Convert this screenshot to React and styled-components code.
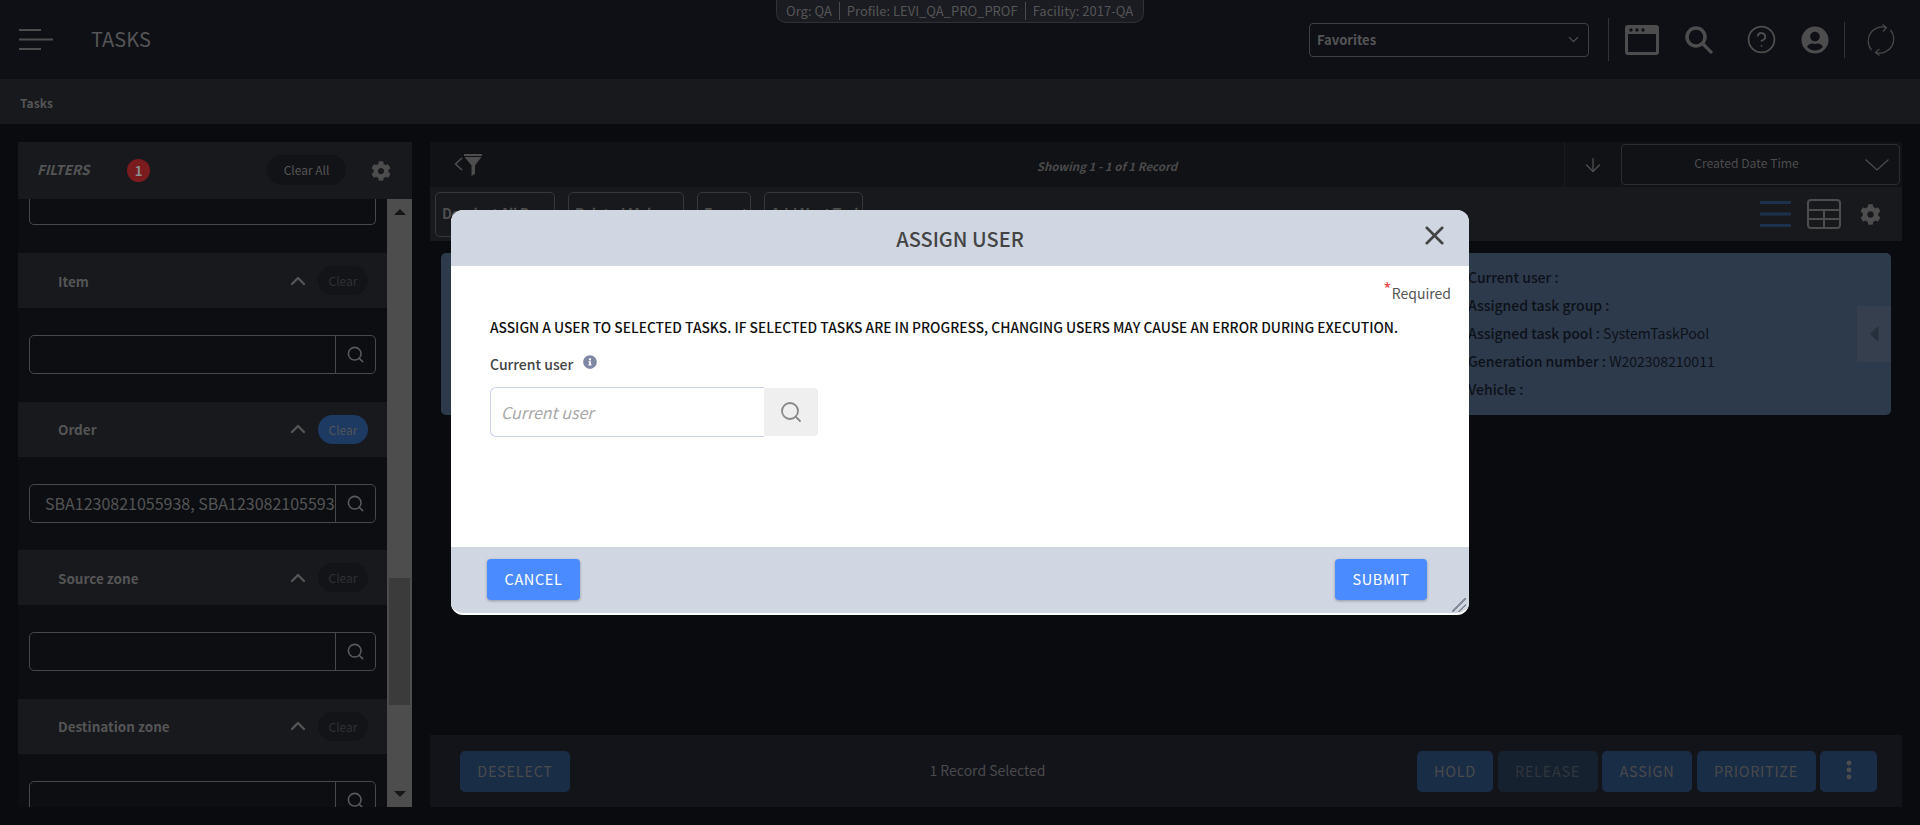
import React from 'react';
import styled, { createGlobalStyle } from 'styled-components';
import { ChevronDown, ChevronUp, CircleHelp, Search, ArrowDown, X } from 'lucide-react';
import { FaCog, FaUserCircle, FaInfoCircle, FaCaretLeft } from 'react-icons/fa';

const GlobalStyle = createGlobalStyle`
    html, body {
        margin: 0;
        height: 100%;
        overflow: hidden;
        background: #0a0b0e;
    }

    * {
        box-sizing: border-box;
    }

    body {
        font-family: "Noto Sans CJK SC", "Noto Sans", sans-serif;
        color: #555;
    }
`;

function HamburgerIcon() {
    return (
        <svg width="34" height="21" viewBox="0 0 34 21" fill="none" stroke="#4d4d4d" strokeWidth="2">
            <path d="M0 1h22M0 10.500h34M0 20h22" />
        </svg>
    );
}

function BrowserIcon() {
    return (
        <svg width="34" height="30" viewBox="0 0 34 30">
            <path
                fillRule="evenodd"
                fill="#4d4d4d"
                d="M3 0h28a3 3 0 0 1 3 3v24a3 3 0 0 1-3 3H3a3 3 0 0 1-3-3V3a3 3 0 0 1 3-3zM3 9v18h28V9z"
            />
            <circle cx="6" cy="5" r="1.700" fill="#0f1015" />
            <circle cx="12" cy="5" r="1.700" fill="#0f1015" />
            <circle cx="18" cy="5" r="1.700" fill="#0f1015" />
        </svg>
    );
}

function BigSearchIcon() {
    return (
        <svg width="28" height="28" viewBox="0 0 28 28" fill="none" stroke="#4d4d4d">
            <circle cx="11" cy="11" r="9" strokeWidth="3.500" />
            <path d="M17.500 17.500L27 27" strokeWidth="3.200" />
        </svg>
    );
}

function RefreshIcon() {
    return (
        <svg width="30" height="32" viewBox="0 0 30 32" fill="none" stroke="#4a4a4a" strokeWidth="1.200">
            <path d="M20 3.500A14 14 0 0 0 5.500 26" />
            <path d="M16.500 0.500L20.500 3.500L17 7.500" />
            <path d="M10 28.500A14 14 0 0 0 24.500 6" />
            <path d="M13.500 25L9.500 28.500L13.500 31.500" />
        </svg>
    );
}

function FilterToggleIcon() {
    return (
        <svg width="28" height="22" viewBox="0 0 28 22">
            <path d="M8 4L1.500 10L8 16" fill="none" stroke="#4d4d4d" strokeWidth="1.600" />
            <path d="M10 0h18v2H10zM10.500 3h17l-6.500 8.500V20l-3.500 2V11.500z" fill="#4d4d4d" />
        </svg>
    );
}

function TableIcon() {
    return (
        <svg width="34" height="30" viewBox="0 0 34 30" fill="none" stroke="#4d4d4d" strokeWidth="2">
            <rect x="1" y="1" width="32" height="28" rx="3" />
            <path d="M1 11h32M1 20h32M17 11v18" />
        </svg>
    );
}

function ListIcon() {
    return (
        <svg width="31" height="26" viewBox="0 0 31 26" fill="#1b324f">
            <rect width="31" height="3" />
            <rect y="11.500" width="31" height="3" />
            <rect y="23" width="31" height="3" />
        </svg>
    );
}

function MoreIcon() {
    return (
        <svg width="6" height="20" viewBox="0 0 6 20" fill="#4d4d4d">
            <circle cx="3" cy="3" r="2.400" />
            <circle cx="3" cy="10" r="2.400" />
            <circle cx="3" cy="17" r="2.400" />
        </svg>
    );
}

function WideChevronIcon() {
    return (
        <svg width="24" height="12" viewBox="0 0 24 12" fill="none" stroke="#4d4d4d" strokeWidth="1.200">
            <path d="M0.500 0.500L12 11L23.500 0.500" />
        </svg>
    );
}

function FilterSection({ title, value, active }) {
    return (
        <section>
            <SectionHeader>
                <SectionTitle>{title}</SectionTitle>
                <ChevronUp size={24} strokeWidth={2.4} color="#555" />
                <ClearPill $active={active}>Clear</ClearPill>
            </SectionHeader>
            <SectionBody>
                <SearchField>
                    <FieldValue>{value}</FieldValue>
                    <FieldButton>
                        <Search size={19} color="#5a5a5a" strokeWidth={2} />
                    </FieldButton>
                </SearchField>
            </SectionBody>
        </section>
    );
}

export default function App() {
    return (
        <>
            <GlobalStyle />
            <Page>
                <TopBar>
                    <HamburgerIcon />
                    <PageTitle>TASKS</PageTitle>
                    <ContextPill>
                        <ContextItem>Org: QA</ContextItem>
                        <ContextItem>Profile: LEVI_QA_PRO_PROF</ContextItem>
                        <ContextItem>Facility: 2017-QA</ContextItem>
                    </ContextPill>
                    <FavoritesSelect>
                        <span>Favorites</span>
                        <ChevronDown size={17} color="#555" strokeWidth={1.5} />
                    </FavoritesSelect>
                    <TallDivider />
                    <TopIcons>
                        <BrowserIcon />
                        <BigSearchIcon />
                        <CircleHelp size={31} color="#4d4d4d" strokeWidth={1.400} />
                        <FaUserCircle size={28} color="#4d4d4d" />
                    </TopIcons>
                    <ShortDivider />
                    <RefreshIcon />
                </TopBar>

                <Breadcrumb>Tasks</Breadcrumb>

                <Content>
                    <Sidebar>
                        <FiltersHeader>
                            <FiltersTitle>FILTERS</FiltersTitle>
                            <CountBadge>1</CountBadge>
                            <ClearAll>Clear All</ClearAll>
                            <FaCog size={20} color="#4d4d4d" />
                        </FiltersHeader>
                        <SidebarBody>
                            <FilterList>
                                <CutField />
                                <FilterSection title="Item" />
                                <FilterSection title="Order" value="SBA1230821055938, SBA1230821055938" active />
                                <FilterSection title="Source zone" />
                                <FilterSection title="Destination zone" />
                            </FilterList>
                            <Scrollbar>
                                <ScrollArrow />
                                <ScrollThumb />
                                <ScrollArrow $down />
                            </Scrollbar>
                        </SidebarBody>
                    </Sidebar>

                    <Main>
                        <RecordsBar>
                            <FilterToggle>
                                <FilterToggleIcon />
                            </FilterToggle>
                            <RecordCount>Showing 1 - 1 of 1 Record</RecordCount>
                            <SortDirection>
                                <ArrowDown size={22} color="#4d4d4d" strokeWidth={1.500} />
                            </SortDirection>
                            <SortSelect>
                                <span>Created Date Time</span>
                                <SortChevron>
                                    <WideChevronIcon />
                                </SortChevron>
                            </SortSelect>
                        </RecordsBar>

                        <ActionsBar>
                            <OutlineButton $width={120}>Deselect All Pages</OutlineButton>
                            <OutlineButton $width={116}>Related Make</OutlineButton>
                            <OutlineButton $width={54}>Export</OutlineButton>
                            <OutlineButton $width={99}>Add Next Task</OutlineButton>
                            <ViewIcons>
                                <ListIcon />
                                <TableIcon />
                                <FaCog size={21} color="#4d4d4d" />
                            </ViewIcons>
                        </ActionsBar>

                        <CardArea>
                            <TaskCard>
                                <CardFields>
                                    <CardField><b>Current user :</b></CardField>
                                    <CardField><b>Assigned task group :</b></CardField>
                                    <CardField><b>Assigned task pool :</b> SystemTaskPool</CardField>
                                    <CardField><b>Generation number :</b> W202308210011</CardField>
                                    <CardField><b>Vehicle :</b></CardField>
                                </CardFields>
                                <CardTab>
                                    <FaCaretLeft size={24} color="#26303d" />
                                </CardTab>
                            </TaskCard>
                        </CardArea>

                        <BottomBar>
                            <DarkButton $width={110}>DESELECT</DarkButton>
                            <SelectedCount>1 Record Selected</SelectedCount>
                            <BottomActions>
                                <DarkButton $width={76}>HOLD</DarkButton>
                                <DarkButton $width={100} $disabled>RELEASE</DarkButton>
                                <DarkButton $width={90}>ASSIGN</DarkButton>
                                <DarkButton $width={119}>PRIORITIZE</DarkButton>
                                <DarkButton $width={57}><MoreIcon /></DarkButton>
                            </BottomActions>
                        </BottomBar>
                    </Main>
                </Content>

                <Modal>
                    <ModalHeader>
                        <ModalTitle>ASSIGN USER</ModalTitle>
                        <CloseButton>
                            <X size={31} color="#444" strokeWidth={2} />
                        </CloseButton>
                    </ModalHeader>
                    <ModalBody>
                        <RequiredNote><RequiredStar>*</RequiredStar>Required</RequiredNote>
                        <Instruction>
                            ASSIGN A USER TO SELECTED TASKS. IF SELECTED TASKS ARE IN PROGRESS, CHANGING USERS MAY CAUSE AN ERROR DURING EXECUTION.
                        </Instruction>
                        <UserLabel>
                            Current user
                            <FaInfoCircle size={14} color="#7f88a3" />
                        </UserLabel>
                        <UserField>
                            <UserInput placeholder="Current user" />
                            <UserSearch>
                                <Search size={24} color="#888" strokeWidth={1.800} />
                            </UserSearch>
                        </UserField>
                    </ModalBody>
                    <ModalFooter>
                        <PrimaryButton $width={93}>CANCEL</PrimaryButton>
                        <PrimaryButton $width={92}>SUBMIT</PrimaryButton>
                    </ModalFooter>
                    <ResizeHandle />
                </Modal>
            </Page>
        </>
    );
}

const Page = styled.div`
    position: relative;
    display: flex;
    flex-direction: column;
    width: 1920px;
    height: 825px;
    overflow: hidden;
`;

const TopBar = styled.header`
    position: relative;
    display: flex;
    align-items: center;
    height: 79px;
    padding: 0 24px 0 19px;
    background: #0f1015;
`;

const PageTitle = styled.h1`
    flex: 1;
    margin: -2px 0 0 38px;
    font-size: 20px;
    font-weight: 400;
    color: #555;
`;

const ContextPill = styled.div`
    position: absolute;
    top: 0;
    left: 776px;
    display: flex;
    align-items: center;
    width: 368px;
    height: 23px;
    padding: 0 2px 1px;
    background: #1b1c21;
    border: 1px solid #303136;
    border-top: 0;
    border-radius: 0 0 10px 10px;
    font-size: 13px;
    color: #555;
    white-space: nowrap;
`;

const ContextItem = styled.span`
    padding: 0 7px;
    line-height: 18px;

    & + & {
        border-left: 1px solid #4a4a4a;
    }
`;

const FavoritesSelect = styled.div`
    display: flex;
    align-items: center;
    justify-content: space-between;
    width: 280px;
    height: 34px;
    padding: 0 6px 0 7px;
    border: 1px solid #3f3f42;
    border-radius: 4px;
    font-size: 13px;
    font-weight: 700;
    color: #555;

    & > span {
        margin-top: -1px;
    }
`;

const TallDivider = styled.div`
    width: 1px;
    height: 43px;
    margin: 0 16px 0 19px;
    background: #33343a;
`;

const TopIcons = styled.div`
    display: flex;
    align-items: center;
    gap: 26px;

    & > svg:nth-child(3) {
        margin-left: 7px;
    }

    & > svg:nth-child(4) {
        margin-left: -2px;
    }
`;

const ShortDivider = styled.div`
    width: 1px;
    height: 36px;
    margin: 0 21px 0 15px;
    background: #33343a;
`;

const Breadcrumb = styled.div`
    display: flex;
    align-items: center;
    height: 45px;
    padding: 1px 0 0 20px;
    background: #18191d;
    font-size: 12px;
    font-weight: 700;
    color: #555;
`;

const Content = styled.main`
    display: flex;
    gap: 18px;
    height: 701px;
    padding: 18px 18px 0;
`;

const Sidebar = styled.aside`
    display: flex;
    flex-direction: column;
    width: 394px;
    height: 665px;
    background: #0c0e12;
`;

const FiltersHeader = styled.div`
    display: flex;
    align-items: center;
    height: 57px;
    padding: 0 21px 0 20px;
    background: #18191d;
`;

const FiltersTitle = styled.span`
    width: 89px;
    margin: -3px 0 0 -1px;
    font-size: 13.500px;
    font-weight: 700;
    font-style: italic;
    color: #555;
`;

const CountBadge = styled.span`
    display: flex;
    align-items: center;
    justify-content: center;
    width: 23px;
    height: 23px;
    margin: -1px 0 0 1px;
    border-radius: 50%;
    background: #7a1c1e;
    font-size: 13px;
    font-weight: 700;
    color: #8c8c8c;
`;

const ClearAll = styled.span`
    display: flex;
    align-items: center;
    justify-content: center;
    width: 79px;
    height: 30px;
    margin: -1px 25px 0 auto;
    padding-bottom: 2px;
    border-radius: 15px;
    background: #121317;
    font-size: 12px;
    color: #555;
`;

const SidebarBody = styled.div`
    flex: 1;
    display: flex;
    min-height: 0;
`;

const FilterList = styled.div`
    flex: 1;
    min-width: 0;
    overflow: hidden;
`;

const CutField = styled.div`
    height: 26px;
    margin: 0 11px 28px;
    border: 1px solid #47484b;
    border-top: 0;
    border-radius: 0 0 5px 5px;
`;

const SectionHeader = styled.div`
    display: flex;
    align-items: center;
    height: 55px;
    padding: 0 19px 0 40px;
    background: #18191d;
`;

const SectionTitle = styled.span`
    flex: 1;
    font-size: 13.500px;
    font-weight: 700;
    color: #555;
`;

const ClearPill = styled.span`
    display: flex;
    align-items: center;
    justify-content: center;
    width: 50px;
    height: 29px;
    margin-left: 8px;
    border-radius: 15px;
    background: ${(props) => (props.$active ? '#1c3a62' : '#131418')};
    font-size: 12px;
    color: ${(props) => (props.$active ? '#555' : '#303134')};
`;

const SectionBody = styled.div`
    padding: 27px 11px 27.600px;
`;

const SearchField = styled.div`
    display: flex;
    height: 39px;
    border: 1px solid #47484b;
    border-radius: 5px;
`;

const FieldValue = styled.div`
    flex: 1;
    min-width: 0;
    padding-left: 15px;
    overflow: hidden;
    font-size: 16px;
    line-height: 36px;
    color: #555;
    white-space: nowrap;
`;

const FieldButton = styled.div`
    display: flex;
    align-items: center;
    justify-content: center;
    width: 40px;
    border-left: 1px solid #47484b;
`;

const Scrollbar = styled.div`
    display: flex;
    flex-direction: column;
    align-items: center;
    width: 25px;
    background: #4d4d4d;
`;

const ScrollArrow = styled.div`
    width: 0;
    height: 0;
    margin: ${(props) => (props.$down ? 'auto 0 10px' : '10px 0 0')};
    border-left: 6px solid transparent;
    border-right: 6px solid transparent;
    border-top: ${(props) => (props.$down ? '6px solid #161616' : '0')};
    border-bottom: ${(props) => (props.$down ? '0' : '6px solid #161616')};
`;

const ScrollThumb = styled.div`
    width: 21px;
    height: 127px;
    margin-top: 363px;
    background: #3b3b3b;
`;

const Main = styled.div`
    flex: 1;
    display: flex;
    flex-direction: column;
    min-width: 0;
    height: 665px;
`;

const RecordsBar = styled.div`
    display: flex;
    height: 45px;
    background: #111216;
`;

const FilterToggle = styled.div`
    display: flex;
    align-items: center;
    width: 54px;
    padding-left: 24px;
`;

const RecordCount = styled.div`
    flex: 1;
    padding-left: 166px;
    font-size: 11.500px;
    font-weight: 700;
    font-style: italic;
    line-height: 48px;
    text-align: center;
    color: #4a4a4a;
`;

const SortDirection = styled.div`
    display: flex;
    align-items: center;
    justify-content: center;
    width: 57px;
    border-left: 1px solid #1a1b1f;
`;

const SortSelect = styled.div`
    position: relative;
    display: flex;
    align-items: center;
    justify-content: center;
    width: 279px;
    height: 41px;
    margin: 2px 2px 0 0;
    border: 1px solid #2c2d30;
    border-radius: 4px;
    font-size: 12.200px;
    color: #4d4d4d;

    & > span {
        margin: -3px 0 0 -28px;
    }
`;

const SortChevron = styled.div`
    position: absolute;
    top: 14px;
    right: 10px;
    display: flex;
`;

const ActionsBar = styled.div`
    display: flex;
    align-items: center;
    gap: 13px;
    height: 54px;
    padding: 0 21px 0 5px;
    background: #18191d;
`;

const OutlineButton = styled.div`
    width: ${(props) => props.$width}px;
    height: 45px;
    padding: 0 6px;
    border: 1px solid #36373b;
    border-radius: 5px;
    overflow: hidden;
    font-size: 14px;
    font-weight: 700;
    letter-spacing: -0.4px;
    line-height: 40px;
    color: #4d4d4d;
    white-space: nowrap;
`;

const ViewIcons = styled.div`
    display: flex;
    align-items: center;
    gap: 16px;
    margin-left: auto;

    & > svg:last-child {
        margin-left: 3px;
    }
`;

const CardArea = styled.div`
    flex: 1;
    padding: 12px 11px;
`;

const TaskCard = styled.div`
    position: relative;
    height: 162px;
    padding: 10px 0 0 1027px;
    background: #2d3a4c;
    border-radius: 5px;
`;

const CardFields = styled.div`
    display: flex;
    flex-direction: column;
`;

const CardField = styled.div`
    height: 28px;
    font-size: 14px;
    line-height: 28px;
    color: #0c1118;

    & > b {
        font-weight: 500;
    }
`;

const CardTab = styled.div`
    position: absolute;
    top: 53px;
    right: 0;
    display: flex;
    align-items: center;
    justify-content: center;
    width: 34px;
    height: 56px;
    background: #353f4d;
`;

const BottomBar = styled.div`
    display: flex;
    align-items: center;
    height: 72px;
    padding: 0 25px 0 30px;
    background: #13141a;
`;

const DarkButton = styled.div`
    display: flex;
    align-items: center;
    justify-content: center;
    width: ${(props) => props.$width}px;
    height: 41px;
    padding-bottom: 2px;
    border-radius: 5px;
    background: ${(props) => (props.$disabled ? '#162130' : '#1a2d47')};
    font-size: 14.500px;
    letter-spacing: 0.7px;
    color: ${(props) => (props.$disabled ? '#2f353c' : '#4a4a4a')};
`;

const SelectedCount = styled.div`
    flex: 1;
    padding: 0 12px 2px 0;
    font-size: 14px;
    text-align: center;
    color: #4a4a4a;
`;

const BottomActions = styled.div`
    display: flex;
    gap: 4.5px;
`;

const Modal = styled.div`
    position: absolute;
    top: 210px;
    left: 451px;
    display: flex;
    flex-direction: column;
    width: 1018px;
    height: 405px;
    border-bottom: 2px solid #fff;
    border-radius: 12px;
    overflow: hidden;
    background: #fff;
`;

const ModalHeader = styled.div`
    position: relative;
    display: flex;
    align-items: center;
    justify-content: center;
    flex: none;
    height: 56px;
    background: #d0d6e2;
`;

const ModalTitle = styled.h2`
    margin: 0;
    font-size: 20px;
    font-weight: 500;
    color: #444;
`;

const CloseButton = styled.div`
    position: absolute;
    top: 10px;
    right: 19px;
    display: flex;
`;

const ModalBody = styled.div`
    flex: 1;
    display: flex;
    flex-direction: column;
    padding: 15px 18px 0 39px;
`;

const RequiredNote = styled.div`
    align-self: flex-end;
    font-size: 14px;
    line-height: 24px;
    color: #555;
`;

const RequiredStar = styled.span`
    position: relative;
    top: -3px;
    font-size: 18px;
    line-height: 1;
    color: #f04a4a;
`;

const Instruction = styled.p`
    margin: 12px 0 0;
    font-size: 13.800px;
    font-weight: 500;
    line-height: 20px;
    color: #111;
`;

const UserLabel = styled.label`
    display: flex;
    align-items: flex-start;
    gap: 10px;
    margin-top: 16px;
    font-size: 14px;
    font-weight: 500;
    line-height: 22px;
    color: #444;

    & > svg {
        margin-top: 2px;
    }
`;

const UserField = styled.div`
    display: flex;
    margin-top: 12px;
`;

const UserInput = styled.input`
    width: 274px;
    height: 50px;
    padding: 0 10px;
    border: 1px solid #ccd2e6;
    border-right: 0;
    border-radius: 6px 0 0 6px;
    outline: none;
    font-family: inherit;
    font-size: 16px;

    &::placeholder {
        font-style: italic;
        color: #a8a8a8;
    }
`;

const UserSearch = styled.div`
    display: flex;
    align-items: center;
    justify-content: center;
    width: 54px;
    height: 48px;
    margin-top: 1px;
    background: #efefef;
    border-radius: 0 4px 4px 0;
`;

const ModalFooter = styled.div`
    display: flex;
    align-items: center;
    justify-content: space-between;
    flex: none;
    height: 66px;
    padding: 0 42px 0 36px;
    background: #d0d6e2;
`;

const PrimaryButton = styled.div`
    display: flex;
    align-items: center;
    justify-content: center;
    width: ${(props) => props.$width}px;
    height: 41px;
    margin-top: -1px;
    padding-bottom: 2px;
    border-radius: 4px;
    background: #4a8cff;
    box-shadow: 0 1px 3px rgba(0, 0, 0, 0.3);
    font-size: 14.500px;
    letter-spacing: 0.6px;
    color: #fff;
`;

const ResizeHandle = styled.div`
    position: absolute;
    right: 3px;
    bottom: 1px;
    width: 14px;
    height: 14px;
    background: linear-gradient(
        135deg,
        transparent 45%,
        #868b9b 45%,
        #868b9b 55%,
        transparent 55%,
        transparent 68%,
        #868b9b 68%,
        #868b9b 78%,
        transparent 78%
    );
`;
